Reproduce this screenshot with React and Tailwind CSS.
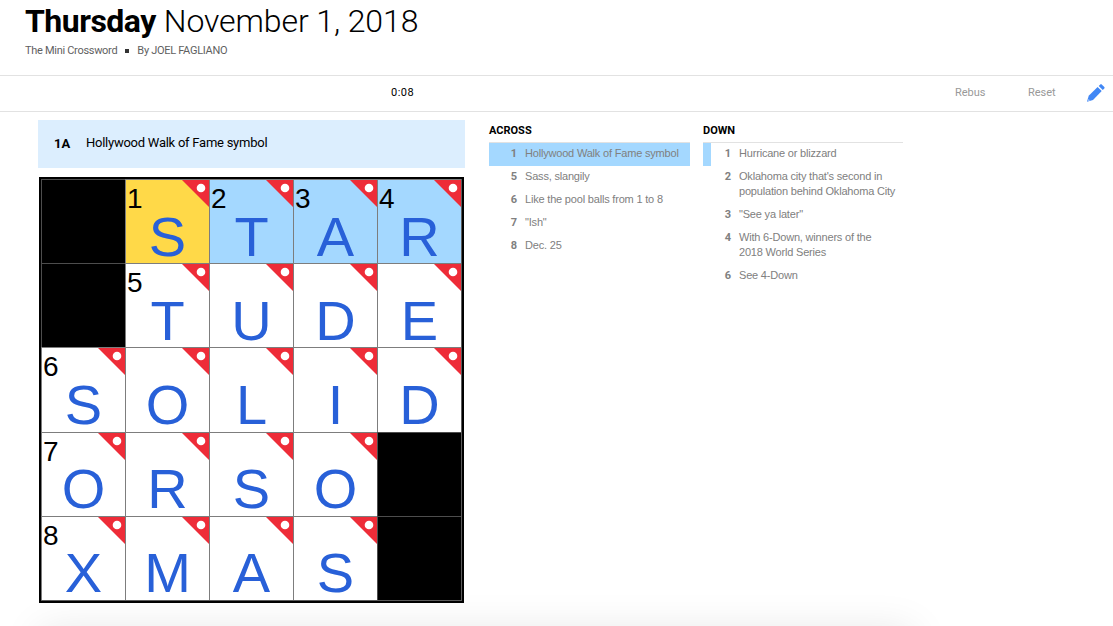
const board = ["#STAR", "#TUDE", "SOLID", "ORSO#", "XMAS#"];
const numbers = { "0-1": 1, "0-2": 2, "0-3": 3, "0-4": 4, "1-1": 5, "2-0": 6, "3-0": 7, "4-0": 8 };

const across = [
  [1, ["Hollywood Walk of Fame symbol"]],
  [5, ["Sass, slangily"]],
  [6, ["Like the pool balls from 1 to 8"]],
  [7, ['"Ish"']],
  [8, ["Dec. 25"]],
];
const down = [
  [1, ["Hurricane or blizzard"]],
  [2, ["Oklahoma city that's second in", "population behind Oklahoma City"]],
  [3, ["\"See ya later\""]],
  [4, ["With 6-Down, winners of the", "2018 World Series"]],
  [6, ["See 4-Down"]],
];

function Cell({ letter, number, row, col }) {
  if (letter === "#") return <div className="border-l border-t border-[#4d4d4d] bg-black" />;
  const bg = row === 0 ? (col === 1 ? "bg-[#ffd948]" : "bg-[#a4d8ff]") : "bg-white";
  return (
    <div className={`relative border-l border-t border-[#7d7d7d] text-center ${bg}`}>
      <svg className="absolute right-0 top-0 h-[27px] w-[27px]" viewBox="0 0 27 27">
        <path d="M0 0H27V27Z" fill="#ee2c38" />
        <circle cx="19" cy="8" r="4.3" fill="#fff" />
      </svg>
      {number && <span className="absolute left-px top-[3px] text-[28px] leading-[32px] text-black">{number}</span>}
      <span className={`block text-[56px] leading-[64px] text-[#2860d8] ${row > 2 ? "pt-[24px]" : "pt-[25px]"}`}>{letter}</span>
    </div>
  );
}

function ClueList({ title, clues, active }) {
  return (
    <section className={active ? "w-[201px]" : "w-[200px]"}>
      <h2 className="h-[23px] border-b border-[#e2e2e2] pt-px text-[11px] font-bold leading-[20px] text-black">{title}</h2>
      <ol>
        {clues.map(([n, lines], i) => (
          <li
            key={n}
            className={`flex border-l-8 pb-[5px] pl-[9px] pt-[3px] text-[11px] leading-[15px] text-[#808080] ${
              i === 0 ? "border-[#a4d8ff]" : "border-transparent"
            } ${i === 0 && active ? "bg-[#a4d8ff]" : ""}`}
          >
            <b className="w-[11px] shrink-0 text-right">{n}</b>
            <span className="ml-2 whitespace-nowrap font-['Liberation_Sans',Arial,sans-serif] tracking-[-0.19px]">
              {lines.map((l) => (
                <span key={l} className="block">{l}</span>
              ))}
            </span>
          </li>
        ))}
      </ol>
    </section>
  );
}

export default function App() {
  return (
    <div className="flex h-[626px] w-[1113px] flex-col overflow-hidden bg-white font-['Roboto',sans-serif] text-black">
      <header className="h-[75px] shrink-0 pl-[25px] pt-px">
        <h1 className="whitespace-nowrap text-[32px] leading-[40px]">
          <span className="font-bold tracking-[-0.5px]">Thursday</span>{" "}
          <span className="font-light tracking-[-0.1px]">November 1, 2018</span>
        </h1>
        <p className="flex items-center pt-px text-[11px] leading-[18px] tracking-[-0.3px] text-[#5f5f5f]">
          <span>The Mini Crossword</span>
          <span className="mx-2 h-1 w-1 bg-[#333]" />
          <span>By JOEL FAGLIANO</span>
        </p>
      </header>
      <nav className="flex h-[37px] shrink-0 items-center border-y border-[#e2e2e2] text-[11px] text-[#999]">
        <span className="ml-[391px] w-[564px] tracking-[0.5px] text-black">0:08</span>
        <span className="w-[73px]">Rebus</span>
        <span className="w-[58px]">Reset</span>
        <svg className="mb-px h-5 w-5" viewBox="0 0 20 20" fill="#4187f5">
          <path d="M1 18.7L2.7 12.7L11.6 4L15.7 8.1L7 17Z" />
          <path d="M12.7 2.9L14.3 1.4Q15 .8 15.7 1.4L18.3 4Q19 4.7 18.3 5.4L16.8 7Z" />
          <path d="M2.5 16L4 17.4L2 18Z" fill="#b8d2fb" />
        </svg>
      </nav>
      <main className="flex h-[514px] shrink-0 pl-[38px] pt-2">
        <div className="w-[451px]">
          <div className="flex h-12 w-[427px] items-center bg-[#dceefe] pl-[16px] text-[13px]">
            <b className="w-[32px]">1A</b>
            <span className="pb-[2px] tracking-[-0.25px]">Hollywood Walk of Fame symbol</span>
          </div>
          <div className="ml-px mt-[9px] h-[426px] w-[425px] border-2 border-black font-['Liberation_Sans',Arial,sans-serif]">
            <div className="grid h-[422px] w-[421px] grid-cols-[repeat(5,84px)] grid-rows-[84px_84px_85px_84px_84px] border-b border-r border-[#5c5c5c]">
              {board.flatMap((line, r) =>
                [...line].map((ch, c) => (
                  <Cell key={`${r}-${c}`} letter={ch} row={r} col={c} number={numbers[`${r}-${c}`]} />
                ))
              )}
            </div>
          </div>
        </div>
        <div className="flex gap-[13px]">
          <ClueList title="ACROSS" clues={across} active />
          <ClueList title="DOWN" clues={down} />
        </div>
      </main>
      <footer className="ml-[40px] h-10 w-[873px] shrink-0 shadow-[0_4px_40px_rgba(0,0,0,0.10)]" />
    </div>
  );
}
